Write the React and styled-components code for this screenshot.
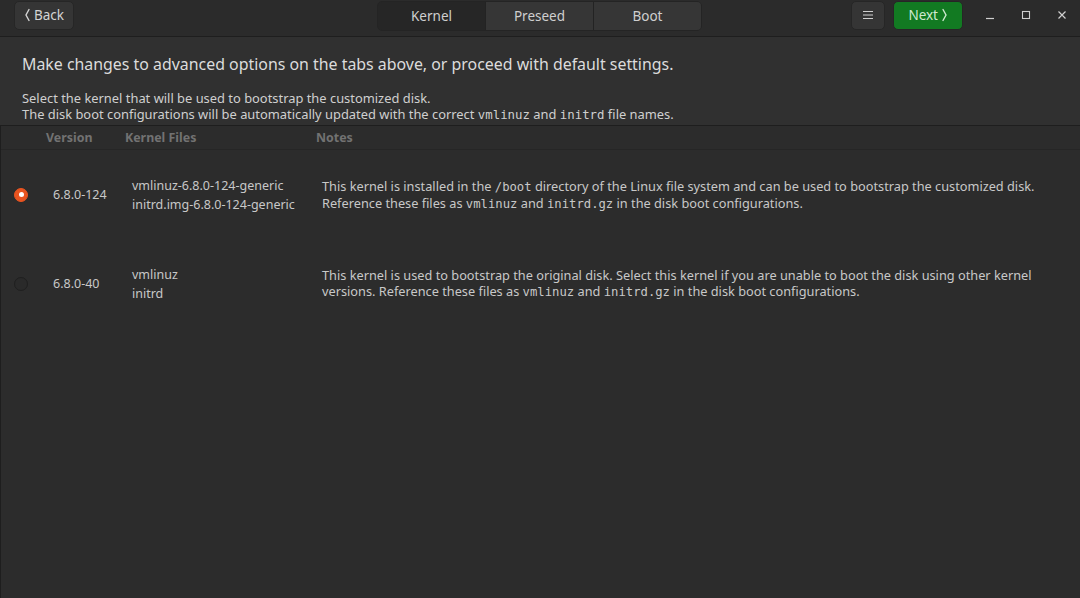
import React from "react";
import styled, { createGlobalStyle } from "styled-components";

const Global = createGlobalStyle`
  html, body { margin: 0; padding: 0; background: #2f2f2f; }
  body { font-family: "Noto Sans", "Open Sans", sans-serif; }
  #root { width: 1080px; height: 598px; }
`;

const Window = styled.div`
  width: 1080px;
  height: 598px;
  display: flex;
  flex-direction: column;
  background: #303030;
  color: #d8d8d8;
  overflow: hidden;
`;

const HeaderBar = styled.header`
  height: 36px;
  flex: none;
  display: flex;
  align-items: center;
  padding: 0 0 0 14px;
  background: #2b2b2b;
  border-bottom: 1px solid #1e1e1e;
  position: relative;
`;

const Button = styled.button`
  height: 29px;
  margin-top: -6px;
  padding: 0 ${(p) => p.$pad || 10}px;
  border: 1px solid #262626;
  border-radius: 5px;
  background: ${(p) => (p.$accent ? "#127a22" : "#353535")};
  color: ${(p) => (p.$accent ? "#cfe9cf" : "#d4d4d4")};
  font-family: inherit;
  font-size: 13.5px;
  display: flex;
  align-items: center;
  gap: 3px;
`;

const Tabs = styled.div`
  position: absolute;
  left: 377px;
  top: 1px;
  display: flex;
  height: 28px;
  border: 1px solid #242424;
  border-radius: 5px;
  overflow: hidden;
`;

const Tab = styled.div`
  width: 107px;
  display: flex;
  align-items: center;
  justify-content: center;
  font-size: 13.5px;
  color: #cfcfcf;
  background: ${(p) => (p.$active ? "#262626" : "#363636")};
  border-left: ${(p) => (p.$first ? "none" : "1px solid #232323")};
`;

const Right = styled.div`
  margin-left: auto;
  display: flex;
  align-items: center;
  gap: 8px;
  height: 100%;
`;

const WinControls = styled.div`
  display: flex;
  align-items: center;
  margin-left: 1px;
  margin-top: -6px;
`;

const WinBtn = styled.div`
  width: 36px;
  height: 28px;
  display: flex;
  align-items: center;
  justify-content: center;
  color: #d0d0d0;
`;

const Content = styled.main`
  flex: 1;
  display: flex;
  flex-direction: column;
`;

const Intro = styled.section`
  padding: 16px 22px 2px 22px;
`;

const Title = styled.h1`
  margin: 0 0 15px 0;
  font-size: 15.9px;
  font-weight: 400;
  color: #dcdcdc;
  line-height: 22px;
`;

const Sub = styled.p`
  margin: 0;
  font-size: 12.9px;
  line-height: 16px;
  color: #cfcfcf;
`;

const Mono = styled.span`
  font-family: "DejaVu Sans Mono", "Liberation Mono", monospace;
  font-size: 0.96em;
`;

const Table = styled.div`
  flex: 1;
  background: #2c2c2c;
  border-top: 1px solid #1e1e1e;
  border-left: 1px solid #1e1e1e;
  display: flex;
  flex-direction: column;
`;

const Cols = "40px 80px 190px 1fr";

const HeadRow = styled.div`
  display: grid;
  grid-template-columns: ${Cols};
  height: 23px;
  align-items: center;
  border-bottom: 1px solid #262626;
  font-size: 12.4px;
  font-weight: 700;
  color: #727272;
`;

const HeadCell = styled.div`
  padding-left: ${(p) => p.$pl || 0}px;
`;

const Row = styled.div`
  display: grid;
  grid-template-columns: ${Cols};
  height: 89px;
  align-items: center;
  font-size: 12.5px;
  color: #c8c8c8;
`;

const RadioCell = styled.div`
  display: flex;
  justify-content: flex-start;
  padding-left: 13px;
`;

const Radio = styled.span`
  width: 14px;
  height: 14px;
  border-radius: 50%;
  box-sizing: border-box;
  display: flex;
  align-items: center;
  justify-content: center;
  background: ${(p) => (p.$on ? "#e95420" : "#2a2a2a")};
  border: 1px solid ${(p) => (p.$on ? "#e95420" : "#1f1f1f")};
  &::after {
    content: "";
    width: 5px;
    height: 5px;
    border-radius: 50%;
    background: ${(p) => (p.$on ? "#fff" : "transparent")};
  }
`;

const Cell = styled.div`
  padding-left: ${(p) => p.$pl || 0}px;
  line-height: ${(p) => p.$lh || 16}px;
`;

const Notes = styled(Cell)`
  font-size: 12.75px;
`;

const Chevron = ({ dir }) => (
  <svg width="7" height="14" viewBox="0 0 7 14">
    <path
      d={dir === "left" ? "M5 1.5 L2 7 L5 12.5" : "M2 1.5 L5 7 L2 12.5"}
      fill="none"
      stroke="currentColor"
      strokeWidth="1.4"
      strokeLinecap="round"
    />
  </svg>
);

const rows = [
  {
    on: true,
    version: "6.8.0-124",
    files: ["vmlinuz-6.8.0-124-generic", "initrd.img-6.8.0-124-generic"],
    notes: (
      <>
        This kernel is installed in the <Mono>/boot</Mono> directory of the Linux file system and can be used to bootstrap the customized disk.
        <br />
        Reference these files as <Mono>vmlinuz</Mono> and <Mono>initrd.gz</Mono> in the disk boot configurations.
      </>
    ),
  },
  {
    on: false,
    version: "6.8.0-40",
    files: ["vmlinuz", "initrd"],
    notes: (
      <>
        This kernel is used to bootstrap the original disk. Select this kernel if you are unable to boot the disk using other kernel
        <br />
        versions. Reference these files as <Mono>vmlinuz</Mono> and <Mono>initrd.gz</Mono> in the disk boot configurations.
      </>
    ),
  },
];

export default function App() {
  return (
    <>
      <Global />
      <Window>
        <HeaderBar>
          <Button $pad={9}>
            <Chevron dir="left" />
            Back
          </Button>
          <Tabs>
            <Tab $first $active>Kernel</Tab>
            <Tab>Preseed</Tab>
            <Tab>Boot</Tab>
          </Tabs>
          <Right>
            <Button $pad={10}>
              <svg width="12" height="12" viewBox="0 0 12 12">
                <path d="M1 2.5h10M1 6h10M1 9.5h10" stroke="#cfcfcf" strokeWidth="1.1" />
              </svg>
            </Button>
            <Button $accent $pad={14}>
              Next
              <Chevron dir="right" />
            </Button>
            <WinControls>
              <WinBtn>
                <svg width="10" height="10" viewBox="0 0 10 10">
                  <path d="M1 8.5h8" stroke="#d0d0d0" strokeWidth="1.2" />
                </svg>
              </WinBtn>
              <WinBtn>
                <svg width="10" height="10" viewBox="0 0 10 10">
                  <rect x="1.5" y="1.5" width="7" height="7" fill="none" stroke="#d0d0d0" strokeWidth="1.1" />
                </svg>
              </WinBtn>
              <WinBtn>
                <svg width="10" height="10" viewBox="0 0 10 10">
                  <path d="M1.5 1.5l7 7M8.5 1.5l-7 7" stroke="#d0d0d0" strokeWidth="1.2" />
                </svg>
              </WinBtn>
            </WinControls>
          </Right>
        </HeaderBar>
        <Content>
          <Intro>
            <Title>Make changes to advanced options on the tabs above, or proceed with default settings.</Title>
            <Sub>
              Select the kernel that will be used to bootstrap the customized disk.
              <br />
              The disk boot configurations will be automatically updated with the correct <Mono>vmlinuz</Mono> and <Mono>initrd</Mono> file names.
            </Sub>
          </Intro>
          <Table>
            <HeadRow>
              <HeadCell />
              <HeadCell $pl={5}>Version</HeadCell>
              <HeadCell $pl={4}>Kernel Files</HeadCell>
              <HeadCell $pl={5}>Notes</HeadCell>
            </HeadRow>
            {rows.map((r) => (
              <Row key={r.version}>
                <RadioCell>
                  <Radio $on={r.on} />
                </RadioCell>
                <Cell $pl={12}>{r.version}</Cell>
                <Cell $pl={11} $lh={19}>
                  {r.files.map((f) => (
                    <div key={f}>{f}</div>
                  ))}
                </Cell>
                <Notes $pl={11}>{r.notes}</Notes>
              </Row>
            ))}
          </Table>
        </Content>
      </Window>
    </>
  );
}
